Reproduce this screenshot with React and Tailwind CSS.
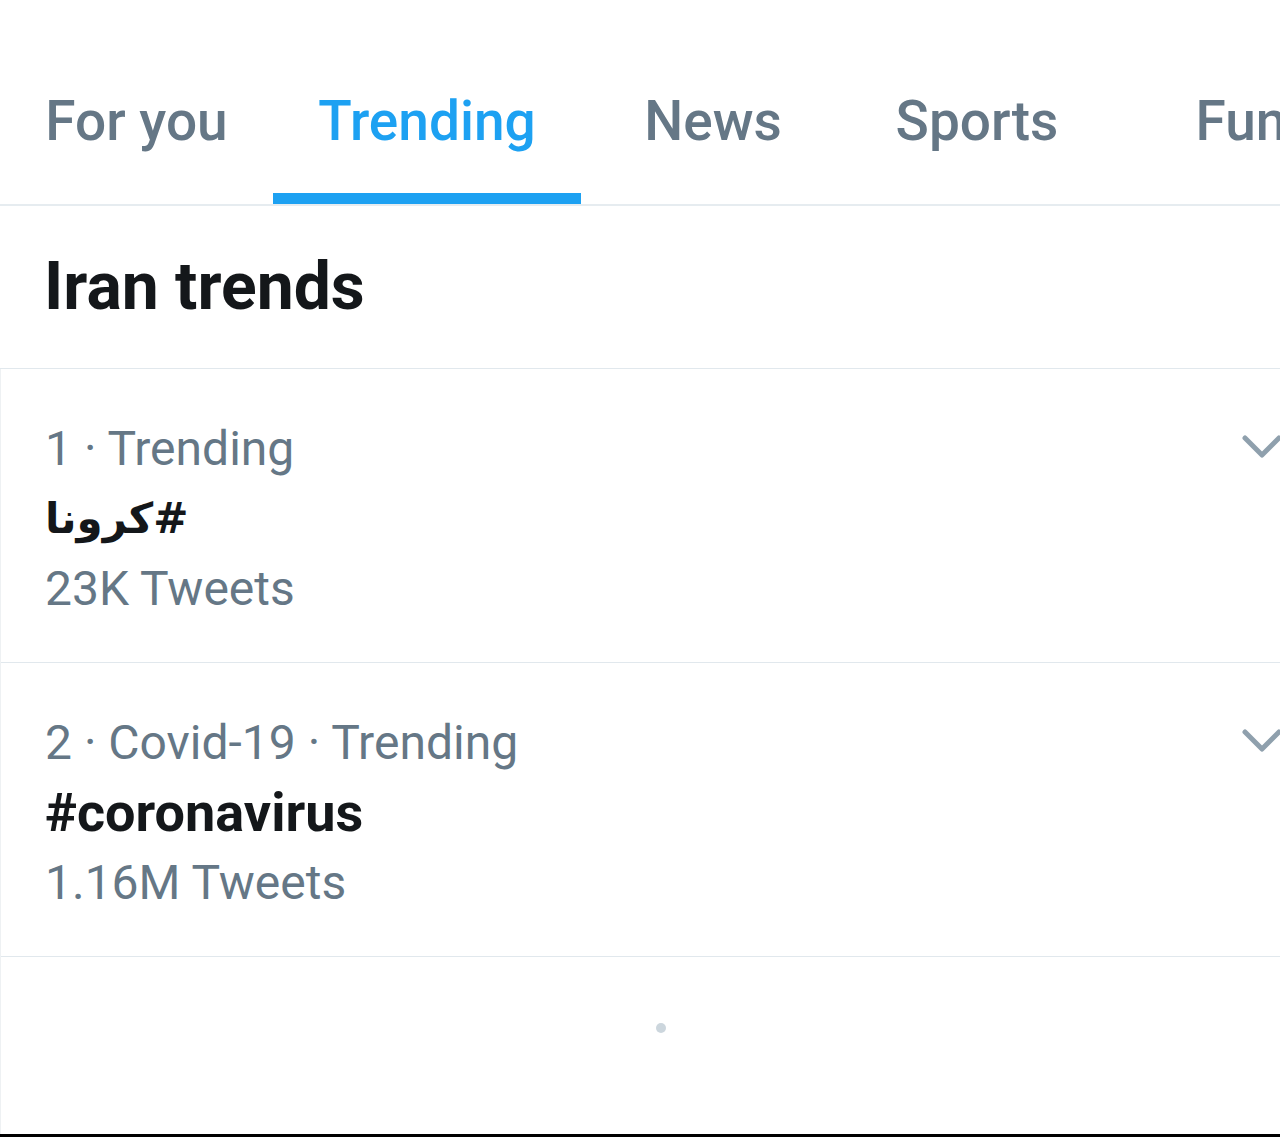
import React from "react";

const tabs = [
  { label: "For you", w: "w-[273px]" },
  { label: "Trending", w: "w-[308px]", active: true },
  { label: "News", w: "w-[264px]" },
  { label: "Sports", w: "w-[264px]" },
  { label: "Fun", w: "w-[264px]" },
];

function Chevron() {
  return (
    <svg width="40" height="26" viewBox="0 0 40 26" fill="none" className="shrink-0">
      <path d="M3 4 L20 21 L37 4" stroke="#8fa0ad" strokeWidth="5" strokeLinecap="round" strokeLinejoin="round" />
    </svg>
  );
}

function Trend({ meta, title, count, arabic }) {
  return (
    <div className="flex justify-between border-b border-[#e1e8ed] pt-[45px] pb-[39px] h-[294px] shrink-0">
      <div className="flex flex-col items-start pl-[44px]">
        <div className="text-[48px] leading-[70px] text-[#657786]">{meta}</div>
        {arabic ? (
          <div className="text-[42px] leading-[70px] font-bold text-[#14171a] w-fit" style={{ fontFamily: "'DejaVu Sans', sans-serif" }} dir="rtl">
            {title}
          </div>
        ) : (
          <div className="text-[54px] leading-[70px] font-bold text-[#14171a]">{title}</div>
        )}
        <div className="text-[48px] leading-[70px] text-[#657786]">{count}</div>
      </div>
      <div className="pt-[20px] mr-[-2px]">
        <Chevron />
      </div>
    </div>
  );
}

export default function App() {
  return (
    <div className="w-[1280px] h-[1137px] bg-white flex flex-col overflow-hidden" style={{ fontFamily: "Roboto, 'DejaVu Sans', sans-serif" }}>
      <div className="flex h-[206px] shrink-0 border-b-2 border-[#e6ecf0] overflow-hidden">
        {tabs.map((t) => (
          <div key={t.label} className={`${t.w} shrink-0 flex flex-col items-center`}>
            <div className={`pt-[94px] text-[55px] leading-none font-medium whitespace-nowrap ${t.active ? "text-[#1da1f2]" : "text-[#657786]"}`}>
              {t.label}
            </div>
            <div className="flex-1" />
            {t.active ? <div className="h-[11px] w-full bg-[#1da1f2]" /> : null}
          </div>
        ))}
      </div>
      <div className="h-[163px] shrink-0 border-b border-[#e1e8ed] pl-[44px] pt-[48px]">
        <div className="text-[66px] leading-none font-bold text-[#14171a]">Iran trends</div>
      </div>
      <div className="flex-1 flex flex-col border-l border-[#eef1f3]">
        <Trend meta="1 · Trending" title="#كرونا" count="23K Tweets" arabic />
        <Trend meta="2 · Covid-19 · Trending" title="#coronavirus" count="1.16M Tweets" />
        <div className="flex-1 flex items-center justify-center pl-[40px] pb-[36px]">
          <div className="w-[10px] h-[10px] rounded-full bg-[#ccd6dd]" />
        </div>
      </div>
      <div className="h-[3px] bg-black shrink-0" />
    </div>
  );
}
